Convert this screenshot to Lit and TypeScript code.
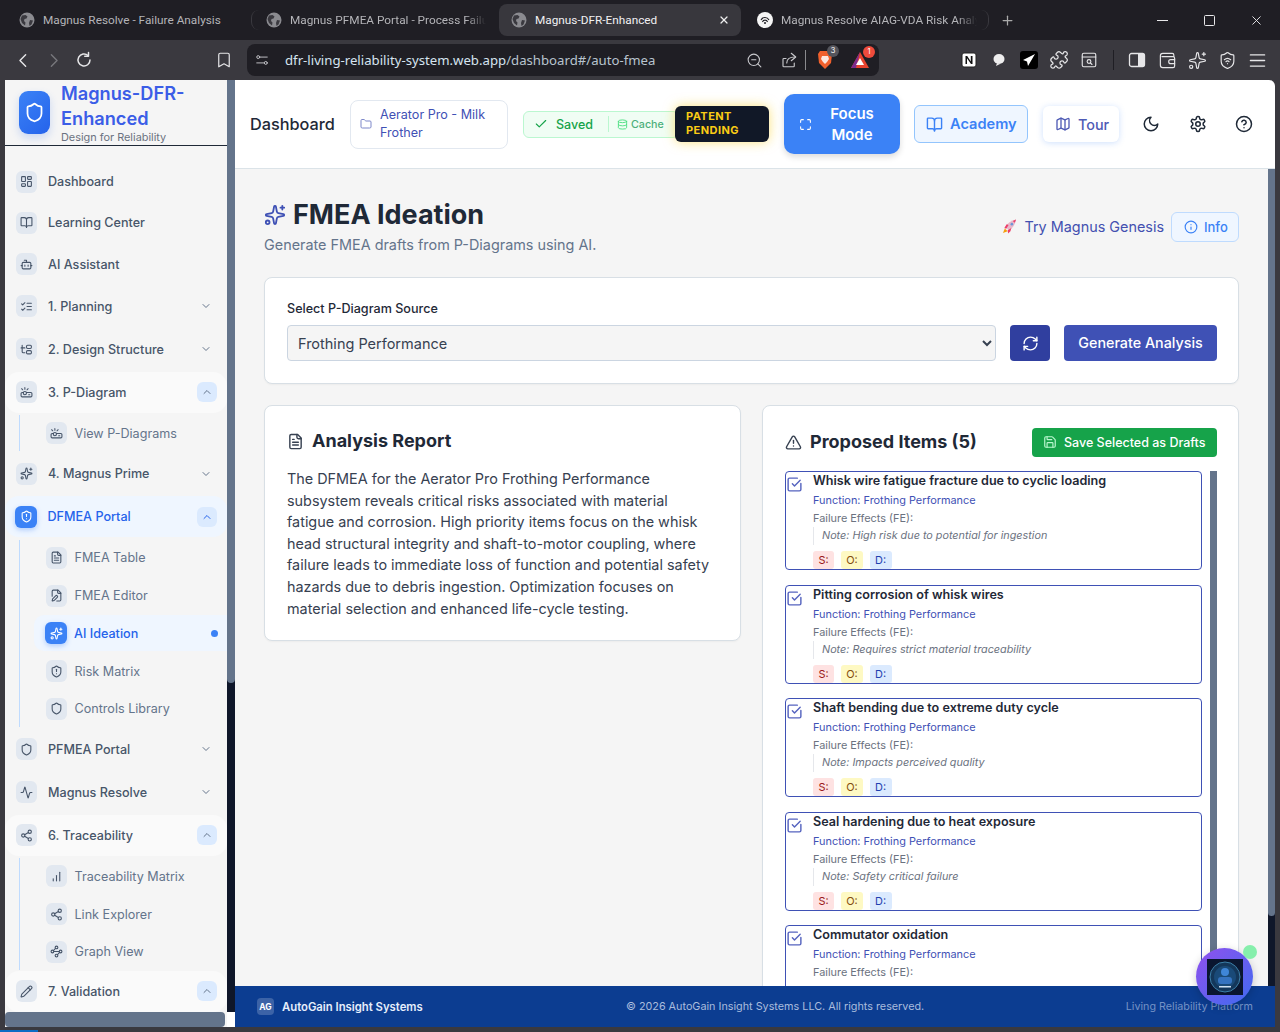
import { LitElement, html, css, svg } from "lit";
import { customElement } from "lit/decorators.js";

const P: Record<string, any> = {
  grid: svg`<rect x="3" y="3" width="7" height="9" rx="1"/><rect x="14" y="3" width="7" height="5" rx="1"/><rect x="14" y="12" width="7" height="9" rx="1"/><rect x="3" y="16" width="7" height="5" rx="1"/>`,
  book: svg`<path d="M12 7v14"/><path d="M3 18a1 1 0 0 1-1-1V4a1 1 0 0 1 1-1h5a4 4 0 0 1 4 4 4 4 0 0 1 4-4h5a1 1 0 0 1 1 1v13a1 1 0 0 1-1 1h-6a3 3 0 0 0-3 3 3 3 0 0 0-3-3z"/>`,
  bot: svg`<path d="M12 8V4H8"/><rect x="4" y="8" width="16" height="12" rx="2"/><path d="M2 14h2"/><path d="M20 14h2"/><path d="M15 13v2"/><path d="M9 13v2"/>`,
  checks: svg`<path d="m3 17 2 2 4-4"/><path d="m3 7 2 2 4-4"/><path d="M13 6h8"/><path d="M13 12h8"/><path d="M13 18h8"/>`,
  tree: svg`<path d="M4 4v12a2 2 0 0 0 2 2h3"/><path d="M2 9h7"/><rect x="12" y="4" width="9" height="6" rx="2"/><rect x="12" y="14" width="9" height="6" rx="2"/>`,
  projector: svg`<path d="M5 7 3 5"/><path d="M9 6V3"/><path d="m13 7 2-2"/><circle cx="9" cy="13" r="3"/><path d="M11.83 12H20a2 2 0 0 1 2 2v4a2 2 0 0 1-2 2H4a2 2 0 0 1-2-2v-4a2 2 0 0 1 2-2h2.17"/><path d="M16 16h2"/>`,
  sparkles: svg`<path d="M11.017 2.814a1 1 0 0 1 1.966 0l1.051 5.558a2 2 0 0 0 1.594 1.594l5.558 1.051a1 1 0 0 1 0 1.966l-5.558 1.051a2 2 0 0 0-1.594 1.594l-1.051 5.558a1 1 0 0 1-1.966 0l-1.051-5.558a2 2 0 0 0-1.594-1.594l-5.558-1.051a1 1 0 0 1 0-1.966l5.558-1.051a2 2 0 0 0 1.594-1.594z"/><path d="M20 2v4"/><path d="M22 4h-4"/><circle cx="4" cy="20" r="2"/>`,
  shield: svg`<path d="M20 13c0 5-3.5 7.5-7.66 8.95a1 1 0 0 1-.67-.01C7.5 20.5 4 18 4 13V6a1 1 0 0 1 1-1c2 0 4.5-1.2 6.24-2.72a1.17 1.17 0 0 1 1.52 0C14.51 3.81 17 5 19 5a1 1 0 0 1 1 1z"/>`,
  shieldAlert: svg`<path d="M20 13c0 5-3.5 7.5-7.66 8.95a1 1 0 0 1-.67-.01C7.5 20.5 4 18 4 13V6a1 1 0 0 1 1-1c2 0 4.5-1.2 6.24-2.72a1.17 1.17 0 0 1 1.52 0C14.51 3.81 17 5 19 5a1 1 0 0 1 1 1z"/><path d="M12 8v4"/><path d="M12 16h.01"/>`,
  file: svg`<path d="M15 2H6a2 2 0 0 0-2 2v16a2 2 0 0 0 2 2h12a2 2 0 0 0 2-2V7Z"/><path d="M14 2v4a2 2 0 0 0 2 2h4"/><path d="M10 9H8"/><path d="M16 13H8"/><path d="M16 17H8"/>`,
  filePen: svg`<path d="M12.5 22H18a2 2 0 0 0 2-2V7l-5-5H6a2 2 0 0 0-2 2v9.5"/><path d="M14 2v4a2 2 0 0 0 2 2h4"/><path d="M13.378 15.626a1 1 0 1 0-3.004-3.004l-5.01 5.012a2 2 0 0 0-.506.854l-.837 2.87a.5.5 0 0 0 .62.62l2.87-.837a2 2 0 0 0 .854-.506z"/>`,
  activity: svg`<path d="M22 12h-2.48a2 2 0 0 0-1.93 1.46l-2.35 8.36a.25.25 0 0 1-.48 0L9.24 2.18a.25.25 0 0 0-.48 0l-2.35 8.36A2 2 0 0 1 4.49 12H2"/>`,
  share: svg`<circle cx="18" cy="5" r="3"/><circle cx="6" cy="12" r="3"/><circle cx="18" cy="19" r="3"/><path d="m8.59 13.51 6.83 3.98"/><path d="m15.41 6.51-6.82 3.98"/>`,
  bars: svg`<path d="M12 20V10"/><path d="M18 20V4"/><path d="M6 20v-4"/>`,
  waypoints: svg`<circle cx="12" cy="4.5" r="2.5"/><path d="m10.2 6.3-3.9 3.9"/><circle cx="4.5" cy="12" r="2.5"/><path d="M7 12h10"/><circle cx="19.5" cy="12" r="2.5"/><path d="m13.8 17.7 3.9-3.9"/><circle cx="12" cy="19.5" r="2.5"/>`,
  pencil: svg`<path d="M21.174 6.812a1 1 0 0 0-3.986-3.987L3.842 16.174a2 2 0 0 0-.5.83l-1.321 4.352a.5.5 0 0 0 .623.622l4.353-1.32a2 2 0 0 0 .83-.497z"/><path d="m15 5 4 4"/>`,
  down: svg`<path d="m6 9 6 6 6-6"/>`,
  up: svg`<path d="m18 15-6-6-6 6"/>`,
  folder: svg`<path d="M20 20a2 2 0 0 0 2-2V8a2 2 0 0 0-2-2h-7.9a2 2 0 0 1-1.69-.9L9.6 3.9A2 2 0 0 0 7.93 3H4a2 2 0 0 0-2 2v13a2 2 0 0 0 2 2Z"/>`,
  check: svg`<path d="M20 6 9 17l-5-5"/>`,
  db: svg`<ellipse cx="12" cy="5" rx="9" ry="3"/><path d="M3 5V19A9 3 0 0 0 21 19V5"/><path d="M3 12A9 3 0 0 0 21 12"/>`,
  scan: svg`<path d="M8 3H5a2 2 0 0 0-2 2v3"/><path d="M21 8V5a2 2 0 0 0-2-2h-3"/><path d="M3 16v3a2 2 0 0 0 2 2h3"/><path d="M16 21h3a2 2 0 0 0 2-2v-3"/>`,
  map: svg`<path d="M14.106 5.553a2 2 0 0 0 1.788 0l3.659-1.83A1 1 0 0 1 21 4.619v12.764a1 1 0 0 1-.553.894l-4.553 2.277a2 2 0 0 1-1.788 0l-4.212-2.106a2 2 0 0 0-1.788 0l-3.659 1.83A1 1 0 0 1 3 19.381V6.618a1 1 0 0 1 .553-.894l4.553-2.277a2 2 0 0 1 1.788 0z"/><path d="M15 5.764v15"/><path d="M9 3.236v15"/>`,
  moon: svg`<path d="M12 3a6 6 0 0 0 9 9 9 9 0 1 1-9-9Z"/>`,
  gear: svg`<path d="M12.22 2h-.44a2 2 0 0 0-2 2v.18a2 2 0 0 1-1 1.73l-.43.25a2 2 0 0 1-2 0l-.15-.08a2 2 0 0 0-2.73.73l-.22.38a2 2 0 0 0 .73 2.73l.15.1a2 2 0 0 1 1 1.72v.51a2 2 0 0 1-1 1.74l-.15.09a2 2 0 0 0-.73 2.73l.22.38a2 2 0 0 0 2.73.73l.15-.08a2 2 0 0 1 2 0l.43.25a2 2 0 0 1 1 1.73V20a2 2 0 0 0 2 2h.44a2 2 0 0 0 2-2v-.18a2 2 0 0 1 1-1.73l.43-.25a2 2 0 0 1 2 0l.15.08a2 2 0 0 0 2.73-.73l.22-.39a2 2 0 0 0-.73-2.73l-.15-.08a2 2 0 0 1-1-1.74v-.5a2 2 0 0 1 1-1.74l.15-.09a2 2 0 0 0 .73-2.73l-.22-.38a2 2 0 0 0-2.73-.73l-.15.08a2 2 0 0 1-2 0l-.43-.25a2 2 0 0 1-1-1.73V4a2 2 0 0 0-2-2z"/><circle cx="12" cy="12" r="3"/>`,
  help: svg`<circle cx="12" cy="12" r="10"/><path d="M9.09 9a3 3 0 0 1 5.83 1c0 2-3 3-3 3"/><path d="M12 17h.01"/>`,
  info: svg`<circle cx="12" cy="12" r="10"/><path d="M12 16v-4"/><path d="M12 8h.01"/>`,
  refresh: svg`<path d="M3 12a9 9 0 0 1 9-9 9.75 9.75 0 0 1 6.74 2.74L21 8"/><path d="M21 3v5h-5"/><path d="M21 12a9 9 0 0 1-9 9 9.75 9.75 0 0 1-6.74-2.74L3 16"/><path d="M8 16H3v5"/>`,
  warn: svg`<path d="m21.73 18-8-14a2 2 0 0 0-3.48 0l-8 14A2 2 0 0 0 4 21h16a2 2 0 0 0 1.73-3"/><path d="M12 9v4"/><path d="M12 17h.01"/>`,
  save: svg`<path d="M15.2 3a2 2 0 0 1 1.4.6l3.8 3.8a2 2 0 0 1 .6 1.4V19a2 2 0 0 1-2 2H5a2 2 0 0 1-2-2V5a2 2 0 0 1 2-2z"/><path d="M17 21v-7a1 1 0 0 0-1-1H8a1 1 0 0 0-1 1v7"/><path d="M7 3v4a1 1 0 0 0 1 1h7"/>`,
  box: svg`<path d="M21 10.5V19a2 2 0 0 1-2 2H5a2 2 0 0 1-2-2V5a2 2 0 0 1 2-2h11"/><path d="m9 11 3 3 8-8"/>`,
  x: svg`<path d="M18 6 6 18"/><path d="m6 6 12 12"/>`,
  plus: svg`<path d="M5 12h14"/><path d="M12 5v14"/>`,
  left: svg`<path d="m15 4-8 8 8 8"/>`,
  right: svg`<path d="m9 4 8 8-8 8"/>`,
  reload: svg`<path d="M20 12a8 8 0 1 1-2.6-5.9"/><path d="M18 2v5h-5"/>`,
  bookmark: svg`<path d="M19 21l-7-4-7 4V5a2 2 0 0 1 2-2h10a2 2 0 0 1 2 2z"/>`,
  tune: svg`<path d="M9 7h12"/><path d="M3 17h12"/><circle cx="5.5" cy="7" r="2.5"/><circle cx="18.5" cy="17" r="2.5"/>`,
  zoom: svg`<circle cx="11" cy="11" r="8"/><path d="m21 21-4.3-4.3"/><path d="M8 11h6"/>`,
  out: svg`<path d="M8 10H5a1 1 0 0 0-1 1v9a1 1 0 0 0 1 1h13a1 1 0 0 0 1-1v-4"/><path d="M9 16c0-5 4-8 11-8"/><path d="m15 3 6 5-6 5"/>`,
  puzzle: svg`<path d="M15.39 4.39a1 1 0 0 0 1.68-.47 2.5 2.5 0 1 1 3.01 3.02 1 1 0 0 0-.47 1.68l1.68 1.68a2.4 2.4 0 0 1 0 3.4l-1.61 1.61a1 1 0 0 1-1.68-.47 2.5 2.5 0 1 0-3.02 3.02 1 1 0 0 1 .47 1.68l-1.6 1.6a2.4 2.4 0 0 1-3.4 0l-1.68-1.68a1 1 0 0 0-1.68.47 2.5 2.5 0 1 1-3.02-3.01 1 1 0 0 0 .47-1.68l-1.68-1.68a2.4 2.4 0 0 1 0-3.4L4.37 8.6a1 1 0 0 1 1.68.47 2.5 2.5 0 1 0 3.02-3.02 1 1 0 0 1-.47-1.68l1.6-1.6a2.4 2.4 0 0 1 3.4 0z"/>`,
  reader: svg`<rect x="3" y="3" width="18" height="18" rx="2"/><path d="M3 8h18"/><circle cx="12" cy="14" r="2.5"/><path d="m14 16 2 2"/>`,
  wallet: svg`<path d="M20 7V5a2 2 0 0 0-2-2H6a3 3 0 0 0-3 3v12a3 3 0 0 0 3 3h13a2 2 0 0 0 2-2V9a2 2 0 0 0-2-2H5"/><path d="M21 11h-5a2 2 0 0 0 0 5h5"/>`,
  shieldWifi: svg`<path d="M20 13c0 5-3.5 7.5-7.66 8.95a1 1 0 0 1-.67-.01C7.5 20.5 4 18 4 13V6a1 1 0 0 1 1-1c2 0 4.5-1.2 6.24-2.72a1.17 1.17 0 0 1 1.52 0C14.51 3.81 17 5 19 5a1 1 0 0 1 1 1z"/><path d="M8 11a6 6 0 0 1 8 0"/><path d="M10 13.5a3 3 0 0 1 4 0"/><path d="M12 16h.01"/>`,
  menu: svg`<path d="M3 5h18"/><path d="M3 12h18"/><path d="M3 19h18"/>`,
};

const ic = (name: string, size = 16, sw = 2) =>
  html`<svg class="ic" width=${size} height=${size} viewBox="0 0 24 24" fill="none" stroke="currentColor" stroke-width=${sw} stroke-linecap="round" stroke-linejoin="round">${P[name]}</svg>`;

const globe = html`<svg class="ic" width="16" height="16" viewBox="0 0 16 16"><circle cx="8" cy="8" r="7.5" fill="#8b8b90"/><path d="M3 3.5 6.5 3l2 1.5-1 2-2 .5-.5 2 1.5 1.5-.5 3L3 11 1.5 7zM11 8l3 .5-1.5 4-2 1.5-.5-3z" fill="#3a393f"/></svg>`;

type Sub = { label: string; icon: string; active?: boolean };
type Item = { label: string; icon: string; chev?: "up" | "down"; open?: boolean; active?: boolean; subs?: Sub[] };

const NAV: Item[] = [
  { label: "Dashboard", icon: "grid" },
  { label: "Learning Center", icon: "book" },
  { label: "AI Assistant", icon: "bot" },
  { label: "1. Planning", icon: "checks", chev: "down" },
  { label: "2. Design Structure", icon: "tree", chev: "down" },
  { label: "3. P-Diagram", icon: "projector", chev: "up", open: true, subs: [{ label: "View P-Diagrams", icon: "projector" }] },
  { label: "4. Magnus Prime", icon: "sparkles", chev: "down" },
  {
    label: "DFMEA Portal", icon: "shieldAlert", chev: "up", open: true, active: true,
    subs: [
      { label: "FMEA Table", icon: "file" },
      { label: "FMEA Editor", icon: "filePen" },
      { label: "AI Ideation", icon: "sparkles", active: true },
      { label: "Risk Matrix", icon: "shieldAlert" },
      { label: "Controls Library", icon: "shield" },
    ],
  },
  { label: "PFMEA Portal", icon: "shield", chev: "down" },
  { label: "Magnus Resolve", icon: "activity", chev: "down" },
  {
    label: "6. Traceability", icon: "share", chev: "up", open: true,
    subs: [
      { label: "Traceability Matrix", icon: "bars" },
      { label: "Link Explorer", icon: "share" },
      { label: "Graph View", icon: "waypoints" },
    ],
  },
  { label: "7. Validation", icon: "pencil", chev: "up", open: true },
];

const PROPOSED = [
  { title: "Whisk wire fatigue fracture due to cyclic loading", note: "Note: High risk due to potential for ingestion" },
  { title: "Pitting corrosion of whisk wires", note: "Note: Requires strict material traceability" },
  { title: "Shaft bending due to extreme duty cycle", note: "Note: Impacts perceived quality" },
  { title: "Seal hardening due to heat exposure", note: "Note: Safety critical failure" },
  { title: "Commutator oxidation", note: "" },
];

@customElement("app-root")
export class AppRoot extends LitElement {
  static styles = css`
    :host { display: block; }
    * { box-sizing: border-box; }
    .ic { display: block; flex: none; }
    .win {
      position: relative; width: 1280px; height: 1032px; overflow: hidden;
      display: flex; flex-direction: column; background: #3a393f;
      font-family: Inter, "Liberation Sans", sans-serif;
    }

    /* browser chrome */
    .tabs {
      height: 40px; flex: none; background: #1f1e24; display: flex; align-items: center;
      font-family: Roboto, "Noto Sans", sans-serif; font-size: 11.8px; color: #b4b4b8;
    }
    .tab { flex: none; height: 32px; display: flex; align-items: center; gap: 8px; padding-left: 19px; border-radius: 8px; }
    .tab span { white-space: nowrap; overflow: hidden; }
    .tab.one { width: 251px; }
    .tab.one span { width: 185px; }
    .tab.two { width: 248px; border-left: 1px solid #3a393f; height: 20px; padding-left: 14px; }
    .tab.two span, .tab.four span { width: 196px; -webkit-mask-image: linear-gradient(90deg, #000 90%, transparent); mask-image: linear-gradient(90deg, #000 90%, transparent); }
    .tab.now { width: 242px; background: #38373d; color: #f0f0f2; position: relative; padding-left: 12px; margin-right: 16px; }
    .tab.now span { width: 172px; }
    .tab.now .ic:last-child { margin-left: 3px; color: #eee; }
    .tab.four { width: 232px; height: 20px; padding-left: 0; border-right: 1px solid #3a393f; }
    .add { margin-left: 11px; color: #aaa; }
    .winbtns { margin-left: auto; display: flex; gap: 32px; padding-right: 16px; color: #e8e8ea; }

    .bar { height: 40px; flex: none; display: flex; align-items: center; color: #e6e6e8; padding-left: 15px; position: relative; }
    .bar .nb { width: 30px; flex: none; }
    .bar .dim { color: #77777c; }
    .book { margin-left: 122px; margin-right: 14px; }
    .url {
      width: 632px; height: 32px; flex: none; background: #1f1e24; border-radius: 8px;
      display: flex; align-items: center; padding-left: 8px; color: #c9c9cd;
    }
    .url p { margin: 0 0 0 16px; font: 13.2px "Noto Sans", sans-serif; color: #b8c4cf; white-space: nowrap; width: 461px; }
    .url p b { font-weight: 400; color: #d6e4f0; }
    .share { margin: 0 7px 0 17px; }
    .sep { width: 1px; height: 20px; background: #8a8a8e; flex: none; }
    .sep.dark { background: #1f1e24; margin: 0 8px 0 9px; }
    .ext { position: relative; flex: none; display: block; }
    .ext.lion { margin: 0 18px 0 11px; }
    .num {
      position: absolute; top: -5px; right: -6px; width: 12px; height: 12px; border-radius: 50%;
      font-size: 7.5px; font-style: normal; line-height: 12px; text-align: center; color: #fff; background: #55555c;
    }
    .num.red { background: #ef4b3c; }
    .exts { display: flex; align-items: center; margin-left: 75px; }
    .slot { width: 30px; flex: none; display: flex; justify-content: center; }

    /* page */
    .page { flex: 1; min-height: 0; display: flex; margin: 0 5px; border-radius: 0 6px 0 0; overflow: hidden; }
    .end { height: 5px; flex: none; padding-top: 3px; }
    .end i { display: block; width: 38px; height: 2px; background: #0b6cc4; }

    .side { width: 230px; flex: none; display: grid; grid-template-columns: 222px 8px; grid-template-rows: 1fr 15px; min-height: 0; }
    .sidemain { background: #f5f5f5; min-height: 0; overflow: hidden; display: flex; flex-direction: column; }
    .vbar { background: #0f172a; }
    .vbar i { display: block; height: 603px; background: #64748b; border-radius: 0 0 4px 4px; }
    .hbar { background: #f5f5f5; padding-right: 2px; }
    .hbar i { display: block; height: 15px; background: #64748b; border-radius: 4px; }
    .corner { background: #fff; }

    .brand { height: 66px; flex: none; border-bottom: 1px solid #1f2937; display: flex; align-items: center; padding-left: 14px; gap: 11px; }
    .mark { width: 31px; height: 43px; flex: none; border-radius: 9px; background: linear-gradient(135deg, #3b82f6, #2563eb); color: #fff; display: flex; align-items: center; justify-content: center; box-shadow: 0 4px 8px rgba(37, 99, 235, 0.2); }
    .brand h1 { margin: 0; font-size: 18.2px; line-height: 25px; font-weight: 600; color: #3b5de7; }
    .brand small { display: block; font-size: 10.9px; line-height: 13px; color: #6b7280; }

    nav { display: flex; flex-direction: column; gap: 2px; padding-top: 16px; }
    .row { height: 39.33px; flex: none; display: flex; align-items: center; padding-left: 11px; font-size: 12.6px; font-weight: 500; color: #475569; border-radius: 14px; }
    .row.tall { height: 41px; }
    .row.open { background: #fafafa; }
    .row.active { background: #eff6ff; color: #2563eb; padding-left: 10px; }
    .row:last-child { margin-top: -1px; }
    .row .label { margin-left: 11px; }
    .row.active .label { margin-left: 10.5px; }
    .tile { width: 21px; height: 22px; flex: none; border-radius: 6px; background: #e2e8f0; display: flex; align-items: center; justify-content: center; color: #475569; }
    .tile.on { background: #3b82f6; color: #fff; box-shadow: 0 2px 5px rgba(59, 130, 246, 0.35); width: 22px; }
    .chev { margin-left: auto; margin-right: 15px; color: #64748b; }
    .chevbox { margin-left: auto; margin-right: 10px; width: 20px; height: 20px; border-radius: 6px; background: #dbeafe; display: flex; align-items: center; justify-content: center; color: #64748b; }
    .active .chevbox { color: #2563eb; }

    .subs { margin: 0.5px 0 0 14px; border-left: 1px solid #bfdbfe; display: flex; flex-direction: column; gap: 1.75px; }
    .sub { height: 36px; display: flex; align-items: center; padding-left: 26px; font-size: 12.6px; color: #64748b; }
    .sub .tile { margin-right: 7.5px; }
    .sub.active { margin-left: 14px; padding-left: 11px; background: #eff6ff; border-radius: 10px 0 0 10px; color: #2563eb; font-weight: 500; }
    .sub.active .tile { margin-right: 7px; }
    .sub.active em { margin-left: auto; margin-right: 9px; width: 7px; height: 7px; border-radius: 50%; background: #3b82f6; }

    .main { flex: 1; min-width: 0; display: flex; flex-direction: column; }
    header { height: 89px; flex: none; background: #fff; border-bottom: 1px solid #dbe3e8; display: flex; align-items: center; padding-left: 15px; }
    header > * { flex: none; }
    .crumb { font-size: 16.3px; font-weight: 500; color: #1f2937; width: 85px; margin-right: 15px; }
    .proj { width: 158px; height: 49px; border: 1px solid #e2e8f0; border-radius: 8px; display: flex; align-items: center; padding-left: 9px; gap: 8px; color: #3f51b5; font-size: 12.6px; line-height: 18px; margin-right: 15px; }
    .proj .ic { color: #7c87c9; }
    .saved { position: relative; width: 156px; height: 27px; margin-right: -4px; border: 1px solid #bbf7d0; border-radius: 6px; background: #f0fdf4; display: flex; align-items: center; color: #16a34a; font-size: 12.5px; font-weight: 500; padding-left: 10px; }
    .saved .t { margin-left: 8px; }
    .saved .div { width: 1px; height: 16px; background: #bbf7d0; margin: 0 8px 0 15px; }
    .saved .db { color: #4ade80; }
    .saved .c { margin-left: 3px; font-size: 10.7px; color: #4caf7a; }
    .patent { position: relative; width: 94px; height: 36px; background: #111827; border-radius: 6px; box-shadow: 0 0 12px rgba(250, 204, 21, 0.55); color: #facc15; font-size: 11px; line-height: 14px; font-weight: 700; letter-spacing: 0.45px; padding: 3px 0 0 11px; margin-right: 15px; }
    .focus { width: 116px; height: 60px; border-radius: 10px; background: #3b82f6; color: #fff; display: flex; align-items: center; padding-left: 15px; font-size: 15px; line-height: 21px; font-weight: 600; text-align: center; box-shadow: 0 3px 6px rgba(0, 0, 0, 0.14); margin-right: 14px; }
    .focus span { flex: 1; padding-right: 8px; }
    .academy { width: 114px; height: 38px; border: 1px solid #93c5fd; border-radius: 6px; background: #eff6ff; color: #3b82f6; display: flex; align-items: center; padding-left: 11px; gap: 7px; font-size: 14.6px; font-weight: 600; margin-right: 15px; }
    .tour { width: 76px; height: 36px; border-radius: 6px; background: #fff; box-shadow: 0 1px 6px rgba(59, 130, 246, 0.25); color: #4f5bb5; display: flex; align-items: center; padding-left: 12px; gap: 7px; font-size: 14.4px; font-weight: 500; margin-right: 14px; }
    .tool { width: 36px; height: 36px; display: flex; align-items: center; justify-content: center; color: #1f2937; margin-right: 10.5px; }

    .work { flex: 1; min-height: 0; display: flex; }
    .content { flex: 1; min-width: 0; background: #f5f5f5; padding: 28px 29px 0; overflow: hidden; }
    .pgbar { width: 7px; flex: none; background: #0f172a; }
    .pgbar i { display: block; height: 747px; background: #64748b; border-radius: 0 0 4px 4px; }

    .head { display: flex; align-items: flex-start; justify-content: space-between; height: 80px; }
    .head h2 { margin: 1px 0 0; display: flex; align-items: center; gap: 7px; font-size: 27px; line-height: 34px; font-weight: 700; color: #1f2937; }
    .head h2 .ic { color: #3f51b5; }
    .head p { margin: 2px 0 0; font-size: 14.4px; line-height: 22px; color: #64748b; }
    .links { display: flex; align-items: center; margin-top: 15px; }
    .links a { display: flex; align-items: center; gap: 7px; font-size: 14.4px; color: #4350b0; margin-right: 7px; padding-bottom: 1px; }
    .infobtn { width: 68px; height: 30px; border: 1px solid #bfdbfe; border-radius: 6px; background: #eff6ff; color: #3b82f6; display: flex; align-items: center; padding: 0 0 1px 12px; gap: 6px; font-size: 13px; font-weight: 500; }

    .card { background: #fff; border: 1px solid #d8dfe5; border-radius: 8px; box-shadow: 0 1px 2px rgba(0, 0, 0, 0.04); }
    .source { height: 107px; padding: 22px 22px 0; margin-bottom: 21px; }
    .source label { display: block; font-size: 12.6px; line-height: 18px; font-weight: 500; color: #1f2937; margin-bottom: 7px; }
    .controls { display: flex; align-items: stretch; height: 36px; }
    select { width: 709px; flex: none; height: 36px; border: 1px solid #cbd5e1; border-radius: 4px; background: #f5f5f5; color: #374151; font: 14.5px Inter, sans-serif; padding-left: 6px; margin-right: 14px; }
    .refresh { width: 40px; background: #303f9f; color: #fff; border-radius: 4px; display: flex; align-items: center; justify-content: center; margin-right: 14px; flex: none; }
    .generate { width: 153px; background: #3f51b5; color: #fff; border-radius: 4px; display: flex; align-items: center; justify-content: center; padding-bottom: 1px; font-size: 14.3px; font-weight: 500; flex: none; }

    .cols { display: grid; grid-template-columns: 477px 477px; gap: 21px; align-items: start; }
    .report { height: 236px; padding: 23px 22px 0; }
    h3 { margin: 0; display: flex; align-items: center; font-size: 18px; line-height: 24px; font-weight: 700; color: #1f2937; gap: 8px; }
    h3 .ic { color: #374151; }
    .report p { margin: 15px 0 0; font-size: 14.4px; line-height: 21.6px; color: #374151; }
    .proposed { height: 640px; padding: 22px 21px 0 22px; }
    .phead { display: flex; align-items: center; justify-content: space-between; height: 29px; margin-bottom: 14px; }
    .phead h3 { margin-bottom: 1px; }
    .savebtn { width: 185px; height: 29px; background: #16a34a; color: #fff; border-radius: 4px; display: flex; align-items: center; padding: 0 0 1px 11px; gap: 7px; font-size: 12.5px; font-weight: 500; }
    .savebtn .ic { color: #bbf7d0; }
    .listwrap { display: flex; justify-content: space-between; }
    .list { width: 417px; display: flex; flex-direction: column; gap: 14.6px; }
    .track { width: 7px; height: 560px; background: #64748b; }
    .item { height: 99px; flex: none; border: 1px solid #3f51b5; border-radius: 4px; display: flex; }
    .item > .ic { color: #5563bf; margin-top: 4px; }
    .body { margin-left: 10px; font-size: 10.9px; line-height: 18px; }
    .body b { display: block; font-size: 12.6px; line-height: 18px; font-weight: 600; color: #1f2937; }
    .fn { color: #3f51b5; margin-top: 1px; }
    .fe { color: #6b7280; }
    .note { color: #6b7280; font-size: 10.8px; font-style: italic; border-left: 1px solid #e5e7eb; padding-left: 8px; }
    .chips { display: flex; gap: 7px; margin-top: 6px; }
    .chips span { height: 18px; border-radius: 3px; line-height: 18px; }
    .chips .s { background: #fee2e2; color: #991b1b; padding: 0 5.5px; }
    .chips .o { background: #fef9c3; color: #854d0e; padding: 0 5px; }
    .chips .d { background: #dbeafe; color: #1e40af; padding: 0 5.5px; }

    footer { height: 41px; flex: none; background: #0c3d91; display: flex; align-items: center; padding: 0 22px; font-size: 10.8px; }
    .ag { width: 17px; height: 17px; flex: none; border-radius: 4px; background: rgba(255, 255, 255, 0.2); color: #fff; font-size: 8.5px; font-weight: 700; display: flex; align-items: center; justify-content: center; margin-right: 8px; }
    .co { width: 344px; color: #e6eefc; font-size: 11.3px; font-weight: 600; flex: none; }
    .copy { color: #a9bcdd; white-space: nowrap; flex: none; }
    .plat { color: #7593c6; font-size: 10.75px; white-space: nowrap; margin-left: auto; }

    .bubble { position: absolute; left: 1196px; top: 948px; width: 57px; height: 57px; border-radius: 50%; background: linear-gradient(135deg, #9150ee, #3f6bf0); display: flex; align-items: center; justify-content: center; box-shadow: 0 2px 8px rgba(0, 0, 0, 0.2); }
    .ping { position: absolute; left: 1243px; top: 945px; width: 14px; height: 14px; border-radius: 50%; background: #86efac; }
  `;

  private renderRow(n: Item) {
    const cls = `row ${n.chev ? "tall" : ""} ${n.open ? "open" : ""} ${n.active ? "active" : ""}`;
    return html`
      <div class=${cls}>
        <div class="tile ${n.active ? "on" : ""}">${ic(n.icon, 13)}</div>
        <span class="label">${n.label}</span>
        ${n.chev === "down" ? html`<span class="chev">${ic("down", 12)}</span>` : null}
        ${n.chev === "up" ? html`<span class="chevbox">${ic("up", 12)}</span>` : null}
      </div>
      ${n.subs
        ? html`<div class="subs">
            ${n.subs.map(
              (s) => html`<div class="sub ${s.active ? "active" : ""}">
                <div class="tile ${s.active ? "on" : ""}">${ic(s.icon, 13)}</div>
                ${s.label}${s.active ? html`<em></em>` : null}
              </div>`
            )}
          </div>`
        : null}
    `;
  }

  render() {
    return html`
      <div class="win">
        <div class="tabs">
          <div class="tab one">${globe}<span>Magnus Resolve - Failure Analysis</span></div>
          <div class="tab two">${globe}<span>Magnus PFMEA Portal - Process Failure</span></div>
          <div class="tab now">${globe}<span>Magnus-DFR-Enhanced</span>${ic("x", 12, 2.5)}</div>
          <div class="tab four">
            <svg class="ic" width="16" height="16" viewBox="0 0 16 16" fill="none" stroke="#1f1e24" stroke-width="1.1">
              <circle cx="8" cy="8" r="8" fill="#f5f5f5" stroke="none" />
              <path d="M4 8a4.5 4.5 0 0 1 8 0M5.5 10a2.6 2.6 0 0 1 5 0" />
              <circle cx="8" cy="11" r="1" fill="#1f1e24" stroke="none" />
            </svg>
            <span>Magnus Resolve AIAG-VDA Risk Analysis</span>
          </div>
          <span class="add">${ic("plus", 15)}</span>
          <div class="winbtns">
            <svg class="ic" width="15" height="15" viewBox="0 0 15 15" fill="none" stroke="currentColor"><path d="M2 7.5h11" /></svg>
            <svg class="ic" width="15" height="15" viewBox="0 0 15 15" fill="none" stroke="currentColor"><rect x="2.5" y="2.5" width="10" height="10" rx="1" /></svg>
            ${ic("x", 15, 1.5)}
          </div>
        </div>

        <div class="bar">
          <span class="nb">${ic("left", 17)}</span>
          <span class="nb dim">${ic("right", 17)}</span>
          ${ic("reload", 18)}
          <span class="book">${ic("bookmark", 18, 1.6)}</span>
          <div class="url">
            ${ic("tune", 14, 1.6)}
            <p><b>dfr-living-reliability-system.web.app</b>/dashboard#/auto-fmea</p>
            ${ic("zoom", 17, 1.5)}
            <span class="share">${ic("out", 18, 1.5)}</span>
            <span class="sep"></span>
            <span class="ext lion">
              <svg class="ic" width="16" height="20" viewBox="0 0 16 20"><path d="M3 1h10l2 3-1 9-6 6-6-6-1-9z" fill="#f1602c" /><path d="M5 6h6l1 3-2 3-2 2-2-2-2-3z" fill="#fff" opacity=".85" /></svg>
              <i class="num">3</i>
            </span>
            <span class="ext">
              <svg class="ic" width="18" height="18" viewBox="0 0 18 18"><path d="M9 1 18 17H0z" fill="#e8432e" /><path d="M9 1 0 17h5z" fill="#7c2a8c" /><path d="M9 7l4 7H5z" fill="#fff" /></svg>
              <i class="num red">1</i>
            </span>
          </div>
          <div class="exts">
            <span class="slot"><svg class="ic" width="18" height="18" viewBox="0 0 18 18"><rect x="2" y="2" width="14" height="14" rx="2" fill="#fff" stroke="#222" /><path d="M5.5 5h1.7l3.6 5.4V5h1.700v8h-1.500L7 7.200V13H5.500z" fill="#111" /></svg></span>
            <span class="slot"><svg class="ic" width="12" height="14" viewBox="0 0 12 14"><ellipse cx="6" cy="6" rx="5.500" ry="5" fill="#eee" /><path d="M4 10l-1 3 4-2z" fill="#eee" /></svg></span>
            <span class="slot"><svg class="ic" width="20" height="20" viewBox="0 0 20 20"><rect x="1" y="1" width="18" height="18" rx="3" fill="#000" /><path d="M16 4 4 10l4 1.500L9 16z" fill="#fff" /></svg></span>
            <span class="slot">${ic("puzzle", 20, 1.5)}</span>
            <span class="slot">${ic("reader", 18, 1.5)}</span>
            <span class="sep dark"></span>
            <span class="slot"><svg class="ic" width="18" height="18" viewBox="0 0 18 18"><rect x="1.500" y="2.500" width="15" height="13" rx="2" fill="none" stroke="#e6e6e8" stroke-width="1.300" /><rect x="10" y="3" width="6" height="12" fill="#e6e6e8" /></svg></span>
            <span class="slot">${ic("wallet", 19, 1.5)}</span>
            <span class="slot">${ic("sparkles", 19, 1.5)}</span>
            <span class="slot">${ic("shieldWifi", 19, 1.5)}</span>
            <span class="slot">${ic("menu", 19, 1.6)}</span>
          </div>
        </div>

        <div class="page">
          <div class="side">
            <div class="sidemain">
              <div class="brand">
                <div class="mark">${ic("shield", 21)}</div>
                <div>
                  <h1>Magnus-DFR-<br />Enhanced</h1>
                  <small>Design for Reliability</small>
                </div>
              </div>
              <nav>${NAV.map((n) => this.renderRow(n))}</nav>
            </div>
            <div class="vbar"><i></i></div>
            <div class="hbar"><i></i></div>
            <div class="corner"></div>
          </div>

          <div class="main">
            <header>
              <div class="crumb">Dashboard</div>
              <div class="proj">${ic("folder", 12)}<span>Aerator Pro - Milk Frother</span></div>
              <div class="saved">
                ${ic("check", 14)}<span class="t">Saved</span><span class="div"></span>
                <span class="db">${ic("db", 11)}</span><span class="c">Cache</span>
              </div>
              <div class="patent">PATENT<br />PENDING</div>
              <div class="focus">${ic("scan", 13)}<span>Focus<br />Mode</span></div>
              <div class="academy">${ic("book", 17)}Academy</div>
              <div class="tour">${ic("map", 16)}Tour</div>
              <div class="tool">${ic("moon", 18)}</div>
              <div class="tool">${ic("gear", 18)}</div>
              <div class="tool">${ic("help", 18)}</div>
            </header>

            <div class="work">
              <div class="content">
                <div class="head">
                  <div>
                    <h2><span>${ic("sparkles", 22)}</span>FMEA Ideation</h2>
                    <p>Generate FMEA drafts from P-Diagrams using AI.</p>
                  </div>
                  <div class="links">
                    <a>
                      <svg class="ic" width="15" height="15" viewBox="0 0 16 16">
                        <path d="M3 10 1 15l5-2z" fill="#f59e0b" />
                        <path d="M3.500 8.500c2-4 6-7 11.500-8-1 5.500-3.500 9.500-7.500 11.500z" fill="#e8b7c9" />
                        <path d="M15 .500c-1 .500-2.500 1-3.500 1.500l2 2c.500-1 1.200-2.300 1.500-3.500z" fill="#ec3f6b" />
                        <path d="M2.500 9.500 5 5.500l2 1-2.500 4zM6 12l4-2.500-1 3.500-2.500 2.500z" fill="#ec3f6b" />
                        <circle cx="10.500" cy="5.500" r="1.400" fill="#6d97d8" />
                      </svg>
                      Try Magnus Genesis
                    </a>
                    <div class="infobtn">${ic("info", 14)}Info</div>
                  </div>
                </div>

                <div class="card source">
                  <label>Select P-Diagram Source</label>
                  <div class="controls">
                    <select><option>Frothing Performance</option></select>
                    <div class="refresh">${ic("refresh", 17)}</div>
                    <div class="generate">Generate Analysis</div>
                  </div>
                </div>

                <div class="cols">
                  <div class="card report">
                    <h3>${ic("file", 17)}Analysis Report</h3>
                    <p>The DFMEA for the Aerator Pro Frothing Performance subsystem reveals critical risks associated with material fatigue and corrosion. High priority items focus on the whisk head structural integrity and shaft-to-motor coupling, where failure leads to immediate loss of function and potential safety hazards due to debris ingestion. Optimization focuses on material selection and enhanced life-cycle testing.</p>
                  </div>
                  <div class="card proposed">
                    <div class="phead">
                      <h3>${ic("warn", 17)}Proposed Items (5)</h3>
                      <div class="savebtn">${ic("save", 14)}Save Selected as Drafts</div>
                    </div>
                    <div class="listwrap">
                      <div class="list">
                        ${PROPOSED.map(
                          (p) => html`<div class="item">
                            ${ic("box", 17)}
                            <div class="body">
                              <b>${p.title}</b>
                              <div class="fn">Function: Frothing Performance</div>
                              <div class="fe">Failure Effects (FE):</div>
                              ${p.note
                                ? html`<div class="note">${p.note}</div>
                                    <div class="chips"><span class="s">S:</span><span class="o">O:</span><span class="d">D:</span></div>`
                                : null}
                            </div>
                          </div>`
                        )}
                      </div>
                      <div class="track"></div>
                    </div>
                  </div>
                </div>
              </div>
              <div class="pgbar"><i></i></div>
            </div>

            <footer>
              <div class="ag">AG</div>
              <div class="co">AutoGain Insight Systems</div>
              <div class="copy">© 2026 AutoGain Insight Systems LLC. All rights reserved.</div>
              <div class="plat">Living Reliability Platform</div>
            </footer>
          </div>
        </div>
        <div class="end"><i></i></div>

        <div class="bubble">
          <svg width="36" height="36" viewBox="0 0 36 36">
            <rect width="36" height="36" fill="#0a1630" />
            <circle cx="18" cy="18" r="15" fill="#14375a" stroke="#3c7fa8" />
            <circle cx="18" cy="18" r="11" fill="#1a4a78" />
            <circle cx="18" cy="13" r="4" fill="#3f86d8" />
            <rect x="11" y="18" width="14" height="7" rx="3" fill="#3573c0" />
            <rect x="12" y="27" width="12" height="1.500" fill="#cfe0f0" />
          </svg>
        </div>
        <div class="ping"></div>
      </div>
    `;
  }
}
